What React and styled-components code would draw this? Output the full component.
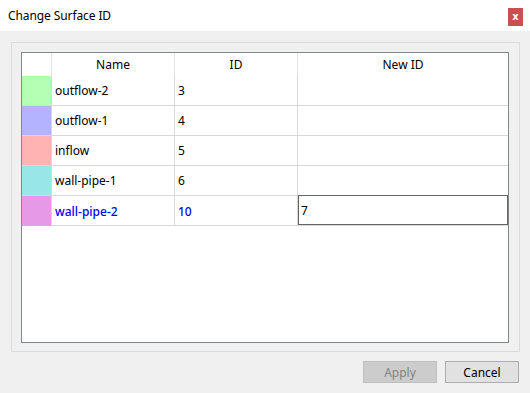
import React from "react";
import styled, { createGlobalStyle } from "styled-components";

const GlobalStyle = createGlobalStyle`
  html, body {
    margin: 0;
    padding: 0;
    background: #f0f0f0;
  }
  body {
    font-family: "Noto Sans", "Open Sans", sans-serif;
    font-size: 12px;
    color: #000;
  }
`;

const Window = styled.div`
  width: 530px;
  height: 393px;
  display: flex;
  flex-direction: column;
  background: #f0f0f0;
`;

const TitleBar = styled.div`
  height: 31px;
  display: flex;
  justify-content: space-between;
  align-items: center;
  background: #fff;
  padding: 0 7px 0 8px;
  box-sizing: border-box;
`;

const Title = styled.span`
  font-size: 12px;
  color: #000;
  letter-spacing: -0.1px;
`;

const CloseButton = styled.div`
  align-self: flex-start;
  margin-top: 8px;
  width: 15px;
  height: 18px;
  background: #c75050;
  color: #fff;
  font-family: "DejaVu Sans", sans-serif;
  font-weight: 700;
  font-size: 10px;
  line-height: 1;
  display: flex;
  align-items: center;
  justify-content: center;
  padding-bottom: 1px;
  box-sizing: border-box;
`;

const Body = styled.div`
  flex: 1;
  display: flex;
  flex-direction: column;
  padding: 11px 11px 0 11px;
`;

const Frame = styled.div`
  width: 509px;
  height: 310px;
  box-sizing: border-box;
  border: 1px solid #dcdcdc;
  padding: 9px 10px 8px 9px;
`;

const Grid = styled.div`
  width: 488px;
  height: 291px;
  box-sizing: border-box;
  border: 1px solid #828790;
  background: #fff;
  display: flex;
  flex-direction: column;
`;

const Row = styled.div`
  display: grid;
  grid-template-columns: 30px 123px 123px 210px;
  height: ${(p) => (p.header ? "23px" : "30px")};
  box-sizing: border-box;
  border-bottom: ${(p) => (p.header ? "none" : "1px solid #d8d8d8")};
`;

const HeadCell = styled.div`
  display: flex;
  align-items: center;
  justify-content: center;
  border-right: ${(p) => (p.last ? "none" : "1px solid #e5e5e5")};
  padding-bottom: 1px;
`;

const Swatch = styled.div`
  background: ${(p) => p.color};
  border-right: 1px solid #d8d8d8;
`;

const Cell = styled.div`
  display: flex;
  align-items: center;
  padding-left: 3px;
  border-right: ${(p) => (p.last ? "none" : "1px solid #d8d8d8")};
  color: ${(p) => (p.selected ? "#0000ff" : "#000")};
  font-weight: ${(p) => (p.selected ? 500 : 400)};
  white-space: nowrap;
`;

const Editor = styled.div`
  position: relative;
  top: -1px;
  height: 30px;
  box-sizing: border-box;
  border: 1px solid #646464;
  display: flex;
  align-items: center;
  padding-left: 2px;
  background: #fff;
`;

const Footer = styled.div`
  display: flex;
  justify-content: flex-end;
  gap: 8px;
  margin-top: 9px;
`;

const Button = styled.div`
  width: 74px;
  height: 22px;
  box-sizing: border-box;
  display: flex;
  align-items: center;
  justify-content: center;
  background: ${(p) => (p.disabled ? "#cccccc" : "#e1e1e1")};
  border: 1px solid ${(p) => (p.disabled ? "#bfbfbf" : "#adadad")};
  color: ${(p) => (p.disabled ? "#838383" : "#000")};
`;

const surfaces = [
  { name: "outflow-2", id: "3", color: "#b3ffb3" },
  { name: "outflow-1", id: "4", color: "#b3b3ff" },
  { name: "inflow", id: "5", color: "#ffb3b3" },
  { name: "wall-pipe-1", id: "6", color: "#99e6e6" },
  { name: "wall-pipe-2", id: "10", color: "#e699e6", selected: true, newId: "7" },
];

export default function App() {
  return (
    <>
      <GlobalStyle />
      <Window>
        <TitleBar>
          <Title>Change Surface ID</Title>
          <CloseButton>x</CloseButton>
        </TitleBar>
        <Body>
          <Frame>
            <Grid>
              <Row header>
                <HeadCell />
                <HeadCell>Name</HeadCell>
                <HeadCell>ID</HeadCell>
                <HeadCell last>New ID</HeadCell>
              </Row>
              {surfaces.map((s) => (
                <Row key={s.name}>
                  <Swatch color={s.color} />
                  <Cell selected={s.selected}>{s.name}</Cell>
                  <Cell selected={s.selected}>{s.id}</Cell>
                  {s.newId ? <Editor>{s.newId}</Editor> : <Cell last />}
                </Row>
              ))}
            </Grid>
          </Frame>
          <Footer>
            <Button disabled>Apply</Button>
            <Button>Cancel</Button>
          </Footer>
        </Body>
      </Window>
    </>
  );
}
